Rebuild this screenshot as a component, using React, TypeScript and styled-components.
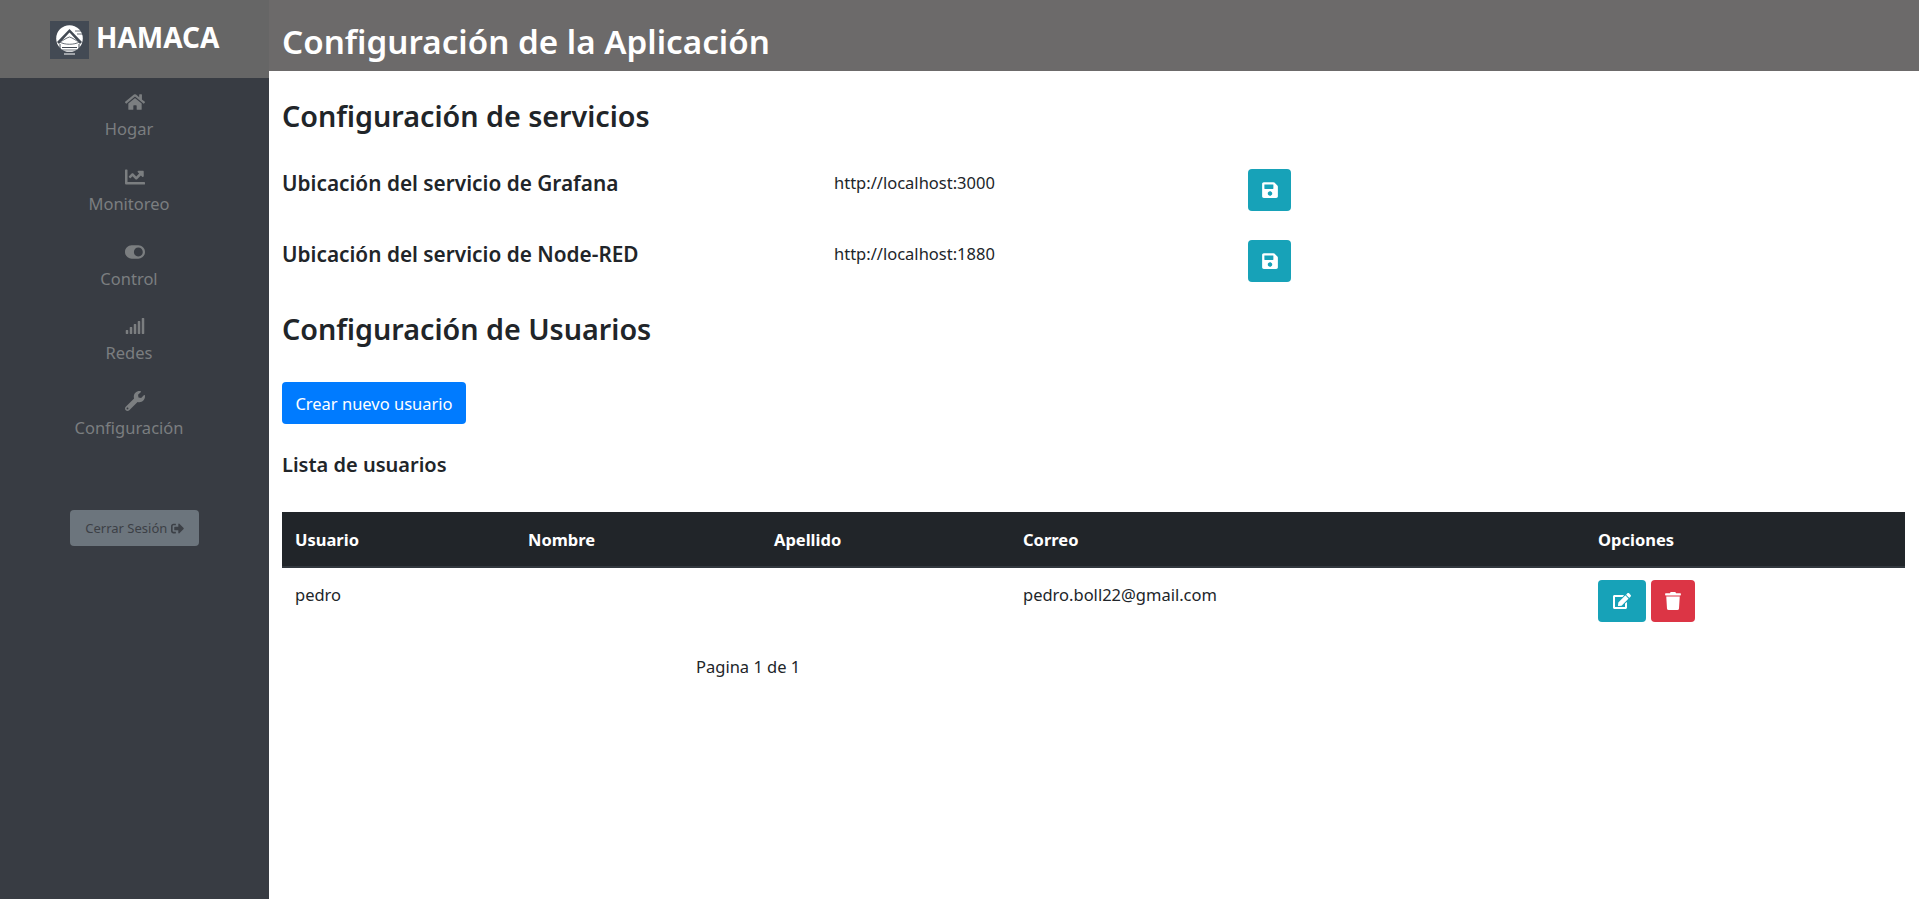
import styled, { createGlobalStyle } from 'styled-components';
import {
  FaChartLine,
  FaEdit,
  FaHome,
  FaSave,
  FaSignal,
  FaSignOutAlt,
  FaToggleOn,
  FaTrash,
  FaWrench,
} from 'react-icons/fa';

const navItems = [
  { label: 'Hogar', icon: <FaHome /> },
  { label: 'Monitoreo', icon: <FaChartLine /> },
  { label: 'Control', icon: <FaToggleOn /> },
  { label: 'Redes', icon: <FaSignal /> },
  { label: 'Configuración', icon: <FaWrench /> },
];

const services = [
  { label: 'Ubicación del servicio de Grafana', url: 'http://localhost:3000' },
  { label: 'Ubicación del servicio de Node-RED', url: 'http://localhost:1880' },
];

export default function App() {
  return (
    <>
      <GlobalStyle />
      <Page>
        <Sidebar>
          <Brand>
            <LogoMark />
            <BrandName>HAMACA</BrandName>
          </Brand>
          <Nav>
            {navItems.map((item) => (
              <NavItem key={item.label}>
                <NavIcon>{item.icon}</NavIcon>
                <NavLabel>{item.label}</NavLabel>
              </NavItem>
            ))}
          </Nav>
          <LogoutButton>
            Cerrar Sesión <FaSignOutAlt />
          </LogoutButton>
        </Sidebar>
        <Main>
          <Header>Configuración de la Aplicación</Header>
          <Content>
            <SectionTitle>Configuración de servicios</SectionTitle>
            {services.map((service) => (
              <ServiceRow key={service.label}>
                <ServiceLabel>{service.label}</ServiceLabel>
                <ServiceUrl>{service.url}</ServiceUrl>
                <IconButton $color="#17a2b8" $width={43}>
                  <FaSave />
                </IconButton>
              </ServiceRow>
            ))}
            <UsersTitle>Configuración de Usuarios</UsersTitle>
            <PrimaryButton>Crear nuevo usuario</PrimaryButton>
            <ListTitle>Lista de usuarios</ListTitle>
            <UsersTable>
              <thead>
                <tr>
                  <HeadCell $width={234}>Usuario</HeadCell>
                  <HeadCell $width={246}>Nombre</HeadCell>
                  <HeadCell $width={249}>Apellido</HeadCell>
                  <HeadCell $width={575}>Correo</HeadCell>
                  <HeadCell>Opciones</HeadCell>
                </tr>
              </thead>
              <tbody>
                <tr>
                  <BodyCell>pedro</BodyCell>
                  <BodyCell />
                  <BodyCell />
                  <BodyCell>pedro.boll22@gmail.com</BodyCell>
                  <BodyCell>
                    <ActionGroup>
                      <IconButton $color="#17a2b8" $width={48}>
                        <FaEdit />
                      </IconButton>
                      <IconButton $color="#dc3545" $width={44}>
                        <FaTrash />
                      </IconButton>
                    </ActionGroup>
                  </BodyCell>
                </tr>
              </tbody>
            </UsersTable>
            <Pagination>Pagina 1 de 1</Pagination>
          </Content>
        </Main>
      </Page>
    </>
  );
}

function LogoMark() {
  return (
    <LogoBox>
      <svg viewBox="0 0 39 38" width="39" height="38">
        <circle cx="19.5" cy="17.5" r="13.3" fill="#fff" />
        <path d="M25 10 H33 M27 13 H33" stroke="#434a54" strokeWidth="0.8" />
        <path d="M19.5 8 L7 21 L9 23 L19.5 11.5 L30 23 L32 21 Z" fill="#434a54" />
        <path d="M19.5 12 L14 18 L25 18 Z" fill="#fff" />
        <path d="M10 21 C14 19 16 17 19.5 16 C23 17 25 19 29 21 C25 24 14 24 10 21 Z" fill="#fff" stroke="#434a54" strokeWidth="0.8" />
        <path d="M10 23 V28 M29 23 V28 M12 26.5 H27" stroke="#434a54" strokeWidth="1" />
        <path d="M12 29 H27" stroke="#434a54" strokeWidth="0.8" />
        <path d="M14 33 H25" stroke="#fff" strokeWidth="1" />
      </svg>
    </LogoBox>
  );
}

const GlobalStyle = createGlobalStyle`
  html,
  body {
    margin: 0;
    padding: 0;
    height: 100%;
    background: #fff;
    color: #212529;
    font-family: 'Noto Sans', 'Open Sans', sans-serif;
    font-size: 16px;
  }

  * {
    box-sizing: border-box;
  }
`;

const Page = styled.div`
  display: flex;
  width: 1919px;
  height: 899px;
  overflow: hidden;
`;

const Sidebar = styled.aside`
  flex: 0 0 269px;
  display: flex;
  flex-direction: column;
  background: #383c43;
`;

const Brand = styled.div`
  height: 78px;
  display: flex;
  align-items: flex-start;
  gap: 7px;
  padding: 21px 0 0 50px;
  background: #666666;
`;

const LogoBox = styled.div`
  width: 39px;
  height: 38px;
  background: #434a54;
`;

const BrandName = styled.span`
  margin-top: -1px;
  font-size: 28px;
  line-height: 34px;
  font-weight: 700;
  color: #fff;
`;

const Nav = styled.nav`
  display: flex;
  flex-direction: column;
  padding-top: 13px;
  gap: 22.8px;
`;

const NavItem = styled.a`
  display: flex;
  flex-direction: column;
  align-items: center;
  width: 258px;
  color: #7b7e80;
`;

const NavIcon = styled.span`
  display: flex;
  margin-left: 12px;
  font-size: 20px;
  height: 22px;
  align-items: center;
`;

const NavLabel = styled.span`
  font-size: 16.5px;
  line-height: 30px;
  padding-top: 1px;
  height: 30px;
`;

const LogoutButton = styled.button`
  align-self: flex-start;
  margin: 68px 0 0 70px;
  width: 129px;
  height: 36px;
  border: 0;
  border-radius: 4px;
  background: #6c757d;
  color: #3c4046;
  font-family: inherit;
  font-size: 13px;
  padding: 0;
  svg {
    vertical-align: -2px;
  }
`;

const Main = styled.main`
  flex: 1;
  min-width: 0;
`;

const Header = styled.h1`
  margin: 0;
  height: 71px;
  padding: 19px 0 0 13px;
  background: #6c6a6a;
  color: #fff;
  font-size: 33.2px;
  line-height: 46px;
  font-weight: 600;
`;

const Content = styled.div`
  padding: 0 14px 0 13px;
`;

const SectionTitle = styled.h2`
  margin: 24px 0 0;
  font-size: 28.7px;
  line-height: 42px;
  font-weight: 600;
`;

const UsersTitle = styled(SectionTitle)`
  margin-top: 26px;
`;

const ServiceRow = styled.div`
  display: grid;
  grid-template-columns: 552px 414px 43px;
  align-items: flex-start;
  margin-top: 29px;
  &:first-of-type {
    margin-top: 32px;
  }
`;

const ServiceLabel = styled.div`
  font-size: 20.8px;
  line-height: 28px;
  font-weight: 600;
`;

const ServiceUrl = styled.div`
  font-size: 16.5px;
  line-height: 28px;
`;

const IconButton = styled.button<{ $color: string; $width: number }>`
  display: inline-flex;
  align-items: center;
  justify-content: center;
  width: ${(p) => p.$width}px;
  height: 42px;
  padding: 0;
  border: 0;
  border-radius: 4px;
  background: ${(p) => p.$color};
  color: #fff;
  font-size: 18px;
`;

const PrimaryButton = styled.button`
  display: block;
  margin-top: 32px;
  width: 184px;
  height: 42px;
  border: 0;
  border-radius: 4px;
  background: #007bff;
  color: #fff;
  font-family: inherit;
  font-size: 16.5px;
  padding: 0;
`;

const ListTitle = styled.h3`
  margin: 26px 0 0;
  font-size: 20px;
  line-height: 30px;
  font-weight: 600;
`;

const UsersTable = styled.table`
  width: 100%;
  margin-top: 32px;
  border-collapse: collapse;
  table-layout: fixed;
`;

const HeadCell = styled.th<{ $width?: number }>`
  width: ${(p) => (p.$width ? `${p.$width}px` : 'auto')};
  height: 55px;
  padding: 0 12px;
  background: #212529;
  border-bottom: 2px solid #32383e;
  color: #fff;
  font-size: 16.5px;
  font-weight: 700;
  text-align: left;

  &:first-child {
    padding-left: 13px;
  }
`;

const BodyCell = styled.td`
  padding: 12px;
  font-size: 16.5px;
  line-height: 30px;
  vertical-align: top;

  &:first-child {
    padding-left: 13px;
  }
`;

const ActionGroup = styled.div`
  display: flex;
  gap: 5px;
`;

const Pagination = styled.div`
  margin: 21px 0 0 414px;
  font-size: 16.5px;
  line-height: 24px;
`;
